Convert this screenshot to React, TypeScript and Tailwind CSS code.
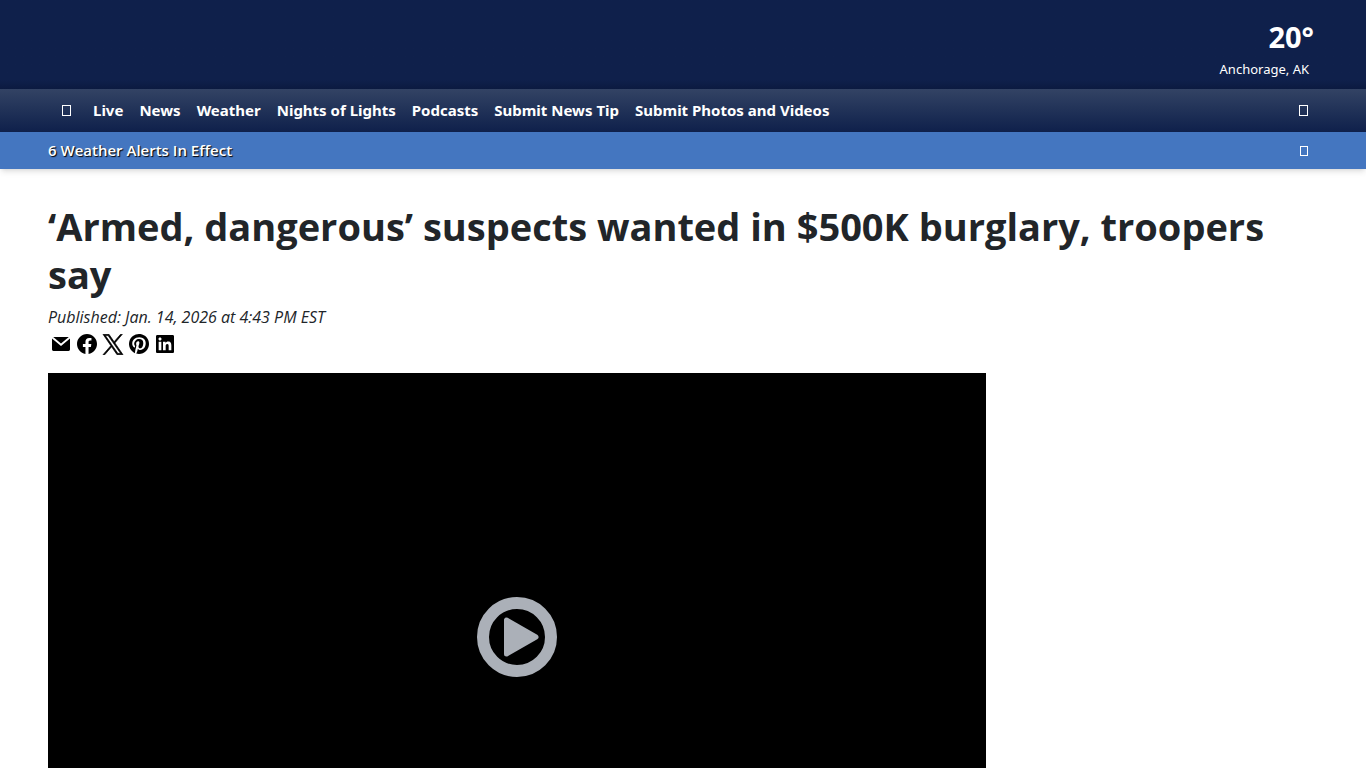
import type { ReactNode } from 'react'
import { RiFacebookCircleFill, RiLinkedinBoxFill, RiPinterestFill } from 'react-icons/ri'

const NAV_ITEMS = [
  'Live',
  'News',
  'Weather',
  'Nights of Lights',
  'Podcasts',
  'Submit News Tip',
  'Submit Photos and Videos',
]

function MailIcon() {
  return (
    <svg viewBox="0 0 24 24" className="size-6" fill="currentColor" aria-hidden="true">
      <path d="M3 6.6 12 14 21 6.6V17.6a1.4 1.4 0 0 1-1.4 1.4H4.4A1.4 1.4 0 0 1 3 17.6Z" />
      <path d="M4.2 5h15.6L12 11.4Z" />
    </svg>
  )
}

function XIcon() {
  return (
    <svg viewBox="-25 -15 1250 1257" className="h-[21px] w-6" fill="currentColor" stroke="currentColor" strokeWidth="40" aria-hidden="true">
      <path d="M714.163 519.284L1160.89 0H1055.03L667.137 450.887L357.328 0H0L468.492 681.821L0 1226.37H105.866L515.491 750.218L842.672 1226.37H1200L714.137 519.284H714.163ZM569.165 687.828L521.697 619.934L144.011 79.6944H306.615L611.412 515.685L658.88 583.579L1055.08 1150.3H892.476L569.165 687.854V687.828Z" />
    </svg>
  )
}

function PlayIcon() {
  return (
    <svg viewBox="0 0 80 80" className="size-20" aria-hidden="true">
      <circle cx="40" cy="40" r="34" fill="none" stroke="#abb0b8" strokeWidth="12" />
      <path d="M29.5 23v34L59 40Z" fill="#abb0b8" stroke="#abb0b8" strokeWidth="5" strokeLinejoin="round" />
    </svg>
  )
}

function ShareLink({ label, children }: { label: string; children: ReactNode }) {
  return (
    <a href="#" aria-label={label} className="flex size-6 items-center justify-center">
      {children}
    </a>
  )
}

export default function App() {
  return (
    <div className="min-h-screen bg-white font-['Open_Sans','Noto_Sans',sans-serif] text-[#212529]">
      <header className="text-white shadow-md">
        <div className="flex h-[89px] flex-col items-end bg-gradient-to-b from-[#0f204b] from-90% to-[#0b1a40] px-[52px] pt-[19px]">
          <span className="text-[29px] leading-9 font-bold">20°</span>
          <span className="mt-[5px] pr-[5px] font-['Noto_Sans',sans-serif] text-[13px] leading-[18px]">Anchorage, AK</span>
        </div>

        <nav className="flex h-[43px] items-center bg-gradient-to-b from-[#334364] to-[#0f204b] pr-[58px] pl-[62px]">
          <button type="button" aria-label="Home" className="mr-[22px] h-[11px] w-[9px] border border-white" />
          <ul className="flex gap-4 font-['Noto_Sans',sans-serif] text-[15px] font-bold">
            {NAV_ITEMS.map((item) => (
              <li key={item}>
                <a href="#" className="whitespace-nowrap">
                  {item}
                </a>
              </li>
            ))}
          </ul>
          <button type="button" aria-label="Search" className="ml-auto h-[11px] w-[9px] border border-white" />
        </nav>

        <div className="flex h-[37px] items-center justify-between bg-[#4476c0] pr-[58px] pl-12">
          <a href="#" className="text-[15px] font-semibold text-shadow-[1px_1px_1px_#000000]">
            6 Weather Alerts In Effect
          </a>
          <button type="button" aria-label="Show alerts" className="h-[10px] w-2 border border-white" />
        </div>
      </header>

      <main className="px-12 pt-[33px]">
        <h1 className="text-[38px] leading-12 font-bold">
          ‘Armed, dangerous’ suspects wanted in $500K burglary, troopers say
        </h1>
        <p className="mt-[7px] text-[16px] leading-6 italic">Published: Jan. 14, 2026 at 4:43 PM EST</p>

        <div className="mt-[3px] flex gap-[2px] pl-px text-black">
          <ShareLink label="Email">
            <MailIcon />
          </ShareLink>
          <ShareLink label="Facebook">
            <RiFacebookCircleFill className="size-6" />
          </ShareLink>
          <ShareLink label="X">
            <XIcon />
          </ShareLink>
          <ShareLink label="Pinterest">
            <RiPinterestFill className="size-6" />
          </ShareLink>
          <ShareLink label="LinkedIn">
            <RiLinkedinBoxFill className="size-6" />
          </ShareLink>
        </div>

        <div className="mt-[17px] flex gap-8">
          <div className="flex aspect-video flex-1 items-center justify-center bg-black">
            <button type="button" aria-label="Play video">
              <PlayIcon />
            </button>
          </div>
          <aside className="w-[300px]" />
        </div>
      </main>
    </div>
  )
}
